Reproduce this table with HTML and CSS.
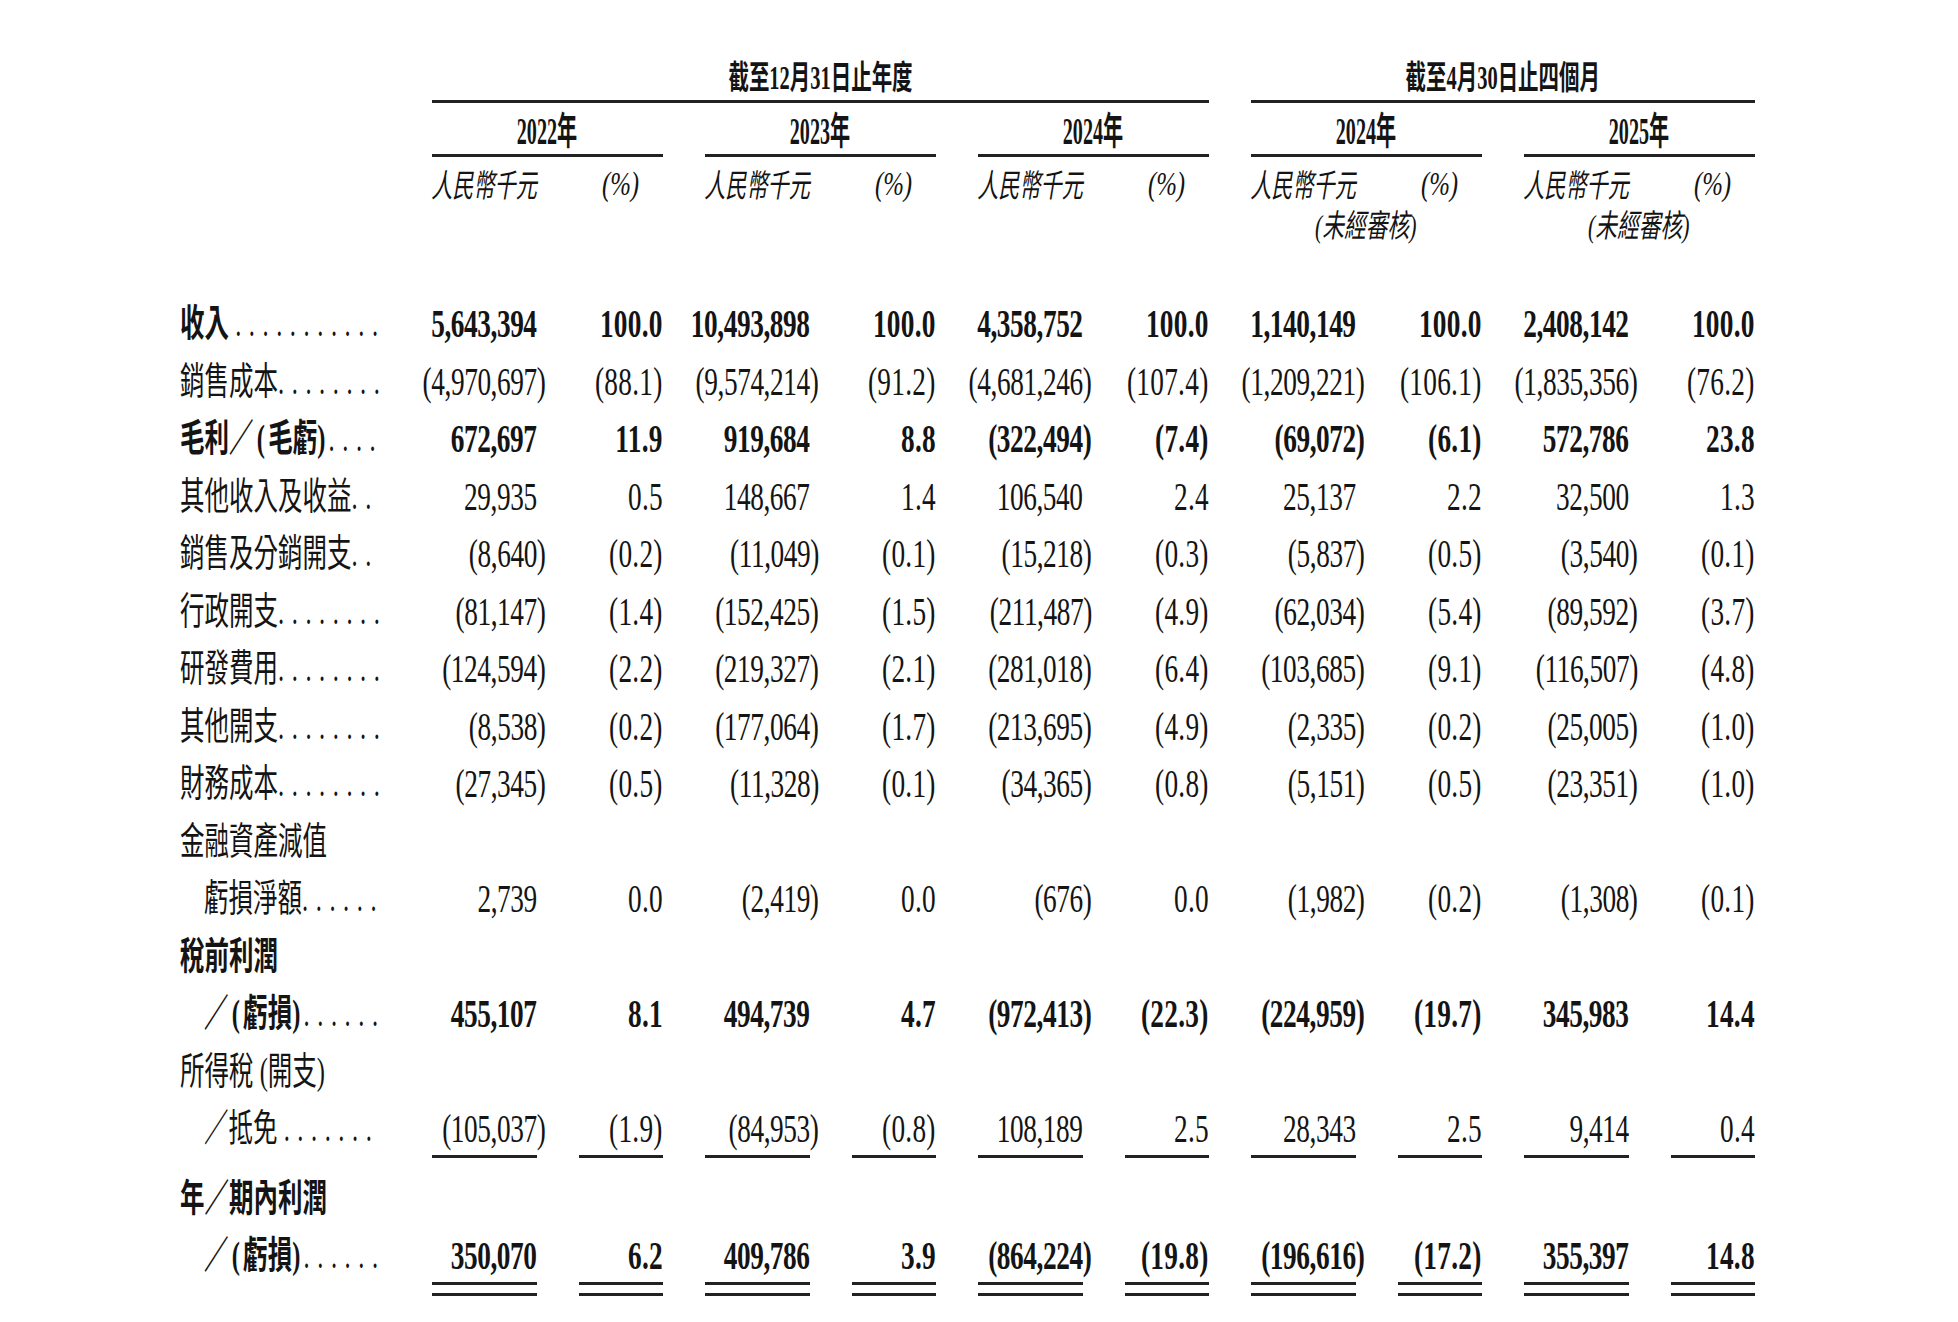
FILE: index.html
```html
<!DOCTYPE html>
<html lang="zh-Hant">
<head>
<meta charset="utf-8">
<title>綜合損益表摘要</title>
<link rel="stylesheet" href="styles.css">
</head>
<body>
<main class="sheet">
  <div class="table">
    <div class="blank"></div>
    <div class="period span-6"><span class="ptx">截至12月31日止年度</span></div>
    <div class="period span-4"><span class="ptx">截至4月30日止四個月</span></div>

    <div class="blank"></div>
    <div class="year"><span class="ytx">2022年</span></div>
    <div class="year"><span class="ytx">2023年</span></div>
    <div class="year"><span class="ytx">2024年</span></div>
    <div class="year"><span class="ytx">2024年</span></div>
    <div class="year"><span class="ytx">2025年</span></div>

    <div class="blank"></div>
    <div class="unit"><span class="utx">人民幣千元</span></div><div class="unit"><span class="ptc">(%)</span></div>
    <div class="unit"><span class="utx">人民幣千元</span></div><div class="unit"><span class="ptc">(%)</span></div>
    <div class="unit"><span class="utx">人民幣千元</span></div><div class="unit"><span class="ptc">(%)</span></div>
    <div class="unit"><span class="utx">人民幣千元</span></div><div class="unit"><span class="ptc">(%)</span></div>
    <div class="unit"><span class="utx">人民幣千元</span></div><div class="unit"><span class="ptc">(%)</span></div>

    <div class="blank"></div>
    <div class="note"></div>
    <div class="note"></div>
    <div class="note"></div>
    <div class="note"><span class="ntx">(未經審核)</span></div>
    <div class="note"><span class="ntx">(未經審核)</span></div>

    <div class="lbl b"><span class="tx">收入 <span class="dots">...........</span></span></div>
    <div class="amt b"><span class="num">5,643,394</span></div><div class="pct b"><span class="num">100.0</span></div>
    <div class="amt b"><span class="num">10,493,898</span></div><div class="pct b"><span class="num">100.0</span></div>
    <div class="amt b"><span class="num">4,358,752</span></div><div class="pct b"><span class="num">100.0</span></div>
    <div class="amt b"><span class="num">1,140,149</span></div><div class="pct b"><span class="num">100.0</span></div>
    <div class="amt b"><span class="num">2,408,142</span></div><div class="pct b"><span class="num">100.0</span></div>

    <div class="lbl"><span class="tx">銷售成本<span class="dots">........</span></span></div>
    <div class="amt"><span class="num neg">(4,970,697)</span></div><div class="pct"><span class="num">(88.1)</span></div>
    <div class="amt"><span class="num neg">(9,574,214)</span></div><div class="pct"><span class="num">(91.2)</span></div>
    <div class="amt"><span class="num neg">(4,681,246)</span></div><div class="pct"><span class="num">(107.4)</span></div>
    <div class="amt"><span class="num neg">(1,209,221)</span></div><div class="pct"><span class="num">(106.1)</span></div>
    <div class="amt"><span class="num neg">(1,835,356)</span></div><div class="pct"><span class="num">(76.2)</span></div>

    <div class="lbl b"><span class="tx">毛利<span class="gap">／(</span>毛虧<span class="gap">)</span><span class="dots">....</span></span></div>
    <div class="amt b"><span class="num">672,697</span></div><div class="pct b"><span class="num">11.9</span></div>
    <div class="amt b"><span class="num">919,684</span></div><div class="pct b"><span class="num">8.8</span></div>
    <div class="amt b"><span class="num neg">(322,494)</span></div><div class="pct b"><span class="num">(7.4)</span></div>
    <div class="amt b"><span class="num neg">(69,072)</span></div><div class="pct b"><span class="num">(6.1)</span></div>
    <div class="amt b"><span class="num">572,786</span></div><div class="pct b"><span class="num">23.8</span></div>

    <div class="lbl"><span class="tx">其他收入及收益<span class="dots">..</span></span></div>
    <div class="amt"><span class="num">29,935</span></div><div class="pct"><span class="num">0.5</span></div>
    <div class="amt"><span class="num">148,667</span></div><div class="pct"><span class="num">1.4</span></div>
    <div class="amt"><span class="num">106,540</span></div><div class="pct"><span class="num">2.4</span></div>
    <div class="amt"><span class="num">25,137</span></div><div class="pct"><span class="num">2.2</span></div>
    <div class="amt"><span class="num">32,500</span></div><div class="pct"><span class="num">1.3</span></div>

    <div class="lbl"><span class="tx">銷售及分銷開支<span class="dots">..</span></span></div>
    <div class="amt"><span class="num neg">(8,640)</span></div><div class="pct"><span class="num">(0.2)</span></div>
    <div class="amt"><span class="num neg">(11,049)</span></div><div class="pct"><span class="num">(0.1)</span></div>
    <div class="amt"><span class="num neg">(15,218)</span></div><div class="pct"><span class="num">(0.3)</span></div>
    <div class="amt"><span class="num neg">(5,837)</span></div><div class="pct"><span class="num">(0.5)</span></div>
    <div class="amt"><span class="num neg">(3,540)</span></div><div class="pct"><span class="num">(0.1)</span></div>

    <div class="lbl"><span class="tx">行政開支<span class="dots">........</span></span></div>
    <div class="amt"><span class="num neg">(81,147)</span></div><div class="pct"><span class="num">(1.4)</span></div>
    <div class="amt"><span class="num neg">(152,425)</span></div><div class="pct"><span class="num">(1.5)</span></div>
    <div class="amt"><span class="num neg">(211,487)</span></div><div class="pct"><span class="num">(4.9)</span></div>
    <div class="amt"><span class="num neg">(62,034)</span></div><div class="pct"><span class="num">(5.4)</span></div>
    <div class="amt"><span class="num neg">(89,592)</span></div><div class="pct"><span class="num">(3.7)</span></div>

    <div class="lbl"><span class="tx">研發費用<span class="dots">........</span></span></div>
    <div class="amt"><span class="num neg">(124,594)</span></div><div class="pct"><span class="num">(2.2)</span></div>
    <div class="amt"><span class="num neg">(219,327)</span></div><div class="pct"><span class="num">(2.1)</span></div>
    <div class="amt"><span class="num neg">(281,018)</span></div><div class="pct"><span class="num">(6.4)</span></div>
    <div class="amt"><span class="num neg">(103,685)</span></div><div class="pct"><span class="num">(9.1)</span></div>
    <div class="amt"><span class="num neg">(116,507)</span></div><div class="pct"><span class="num">(4.8)</span></div>

    <div class="lbl"><span class="tx">其他開支<span class="dots">........</span></span></div>
    <div class="amt"><span class="num neg">(8,538)</span></div><div class="pct"><span class="num">(0.2)</span></div>
    <div class="amt"><span class="num neg">(177,064)</span></div><div class="pct"><span class="num">(1.7)</span></div>
    <div class="amt"><span class="num neg">(213,695)</span></div><div class="pct"><span class="num">(4.9)</span></div>
    <div class="amt"><span class="num neg">(2,335)</span></div><div class="pct"><span class="num">(0.2)</span></div>
    <div class="amt"><span class="num neg">(25,005)</span></div><div class="pct"><span class="num">(1.0)</span></div>

    <div class="lbl"><span class="tx">財務成本<span class="dots">........</span></span></div>
    <div class="amt"><span class="num neg">(27,345)</span></div><div class="pct"><span class="num">(0.5)</span></div>
    <div class="amt"><span class="num neg">(11,328)</span></div><div class="pct"><span class="num">(0.1)</span></div>
    <div class="amt"><span class="num neg">(34,365)</span></div><div class="pct"><span class="num">(0.8)</span></div>
    <div class="amt"><span class="num neg">(5,151)</span></div><div class="pct"><span class="num">(0.5)</span></div>
    <div class="amt"><span class="num neg">(23,351)</span></div><div class="pct"><span class="num">(1.0)</span></div>

    <div class="lbl full"><span class="tx">金融資產減值</span></div>

    <div class="lbl ind"><span class="tx">虧損淨額<span class="dots">......</span></span></div>
    <div class="amt"><span class="num">2,739</span></div><div class="pct"><span class="num">0.0</span></div>
    <div class="amt"><span class="num neg">(2,419)</span></div><div class="pct"><span class="num">0.0</span></div>
    <div class="amt"><span class="num neg">(676)</span></div><div class="pct"><span class="num">0.0</span></div>
    <div class="amt"><span class="num neg">(1,982)</span></div><div class="pct"><span class="num">(0.2)</span></div>
    <div class="amt"><span class="num neg">(1,308)</span></div><div class="pct"><span class="num">(0.1)</span></div>

    <div class="lbl full b"><span class="tx">稅前利潤</span></div>

    <div class="lbl ind b"><span class="tx"><span class="gap">／(</span>虧損<span class="gap">)</span><span class="dots">......</span></span></div>
    <div class="amt b"><span class="num">455,107</span></div><div class="pct b"><span class="num">8.1</span></div>
    <div class="amt b"><span class="num">494,739</span></div><div class="pct b"><span class="num">4.7</span></div>
    <div class="amt b"><span class="num neg">(972,413)</span></div><div class="pct b"><span class="num">(22.3)</span></div>
    <div class="amt b"><span class="num neg">(224,959)</span></div><div class="pct b"><span class="num">(19.7)</span></div>
    <div class="amt b"><span class="num">345,983</span></div><div class="pct b"><span class="num">14.4</span></div>

    <div class="lbl full"><span class="tx">所得稅 (開支)</span></div>

    <div class="lbl ind"><span class="tx">／抵免 <span class="dots">.......</span></span></div>
    <div class="amt u"><span class="num neg">(105,037)</span></div><div class="pct u"><span class="num">(1.9)</span></div>
    <div class="amt u"><span class="num neg">(84,953)</span></div><div class="pct u"><span class="num">(0.8)</span></div>
    <div class="amt u"><span class="num">108,189</span></div><div class="pct u"><span class="num">2.5</span></div>
    <div class="amt u"><span class="num">28,343</span></div><div class="pct u"><span class="num">2.5</span></div>
    <div class="amt u"><span class="num">9,414</span></div><div class="pct u"><span class="num">0.4</span></div>

    <div class="lbl full b lead"><span class="tx">年／期內利潤</span></div>

    <div class="lbl ind b"><span class="tx"><span class="gap">／(</span>虧損<span class="gap">)</span><span class="dots">......</span></span></div>
    <div class="amt b dbl"><span class="num">350,070</span></div><div class="pct b dbl"><span class="num">6.2</span></div>
    <div class="amt b dbl"><span class="num">409,786</span></div><div class="pct b dbl"><span class="num">3.9</span></div>
    <div class="amt b dbl"><span class="num neg">(864,224)</span></div><div class="pct b dbl"><span class="num">(19.8)</span></div>
    <div class="amt b dbl"><span class="num neg">(196,616)</span></div><div class="pct b dbl"><span class="num">(17.2)</span></div>
    <div class="amt b dbl"><span class="num">355,397</span></div><div class="pct b dbl"><span class="num">14.8</span></div>
  </div>
</main>
</body>
</html>
```

FILE: styles.css
```css
html {
  background: #ffffff;
}

body {
  margin: 0;
  background: #ffffff;
  color: #141414;
  text-spacing-trim: space-all;
}

.sheet {
  padding-left: 179.5px;
}

.table {
  display: grid;
  grid-template-columns: 210.1px repeat(5, 105px 84px);
  grid-template-rows: 103px 54px 46px 92.4px repeat(15, 57.5px) 69.5px 70px;
  column-gap: 42px;
  font-family: "Liberation Serif", "Noto Sans CJK TC", serif;
}

/* ---------- column headings ---------- */
.period {
  grid-column: span 6;
  box-sizing: border-box;
  display: flex;
  align-items: flex-end;
  justify-content: center;
  padding-bottom: 5px;
  border-bottom: 3px solid #222;
  font-size: 33px;
  font-weight: 700;
  line-height: 1;
  white-space: nowrap;
}

.period.span-4 {
  grid-column: span 4;
}

.ptx {
  display: inline-block;
  transform: scaleX(0.62);
}

.year {
  grid-column: span 2;
  box-sizing: border-box;
  display: flex;
  align-items: flex-end;
  justify-content: center;
  padding-bottom: 4px;
  border-bottom: 3px solid #222;
  font-size: 38px;
  font-weight: 700;
  line-height: 1;
  white-space: nowrap;
}

.ytx {
  display: inline-block;
  transform: scaleX(0.53);
}

.unit {
  display: flex;
  justify-content: center;
  align-items: flex-start;
  padding-top: 6px;
  line-height: 41px;
  white-space: nowrap;
}

.utx {
  display: inline-block;
  font-family: "Noto Sans CJK TC", sans-serif;
  font-size: 32px;
  font-style: italic;
  transform: scaleX(0.66);
}

.ptc {
  display: inline-block;
  font-family: "Liberation Serif", serif;
  font-size: 34px;
  font-style: italic;
  transform: scaleX(0.73);
}

.note {
  grid-column: span 2;
  display: flex;
  justify-content: center;
  align-items: flex-start;
  padding-top: 3px;
  line-height: 41px;
  white-space: nowrap;
}

.ntx {
  display: inline-block;
  font-size: 32px;
  font-style: italic;
  transform: scaleX(0.68);
}

/* ---------- row labels ---------- */
.lbl {
  grid-column: 1;
  font-size: 38px;
  line-height: 57.5px;
  white-space: nowrap;
}

.lbl.full {
  grid-column: 1 / -1;
}

.lbl.ind {
  padding-left: 24.5px;
}

.lbl.lead {
  padding-top: 12px;
}

.tx {
  display: inline-block;
  transform: scaleX(0.645);
  transform-origin: 0 50%;
}

.gap {
  letter-spacing: 5px;
}

.dots {
  font-weight: 400;
  letter-spacing: 11.7px;
}

/* ---------- figures ---------- */
.amt,
.pct {
  display: flex;
  justify-content: flex-end;
  font-size: 39px;
  line-height: 57.5px;
  white-space: nowrap;
}

.num {
  display: inline-block;
  transform: scaleX(0.7);
  transform-origin: 100% 50%;
}

.amt .num {
  letter-spacing: -0.6px;
}

.pct .num {
  letter-spacing: 0.4px;
}

.amt .num.neg {
  margin-right: -0.233em;
}

.b {
  font-weight: 700;
}

.u {
  box-sizing: border-box;
  border-bottom: 3px solid #222;
}

.dbl {
  background-image: linear-gradient(#222, #222), linear-gradient(#222, #222);
  background-size: 100% 3px, 100% 3px;
  background-position: 0 55px, 0 66px;
  background-repeat: no-repeat;
}
```
